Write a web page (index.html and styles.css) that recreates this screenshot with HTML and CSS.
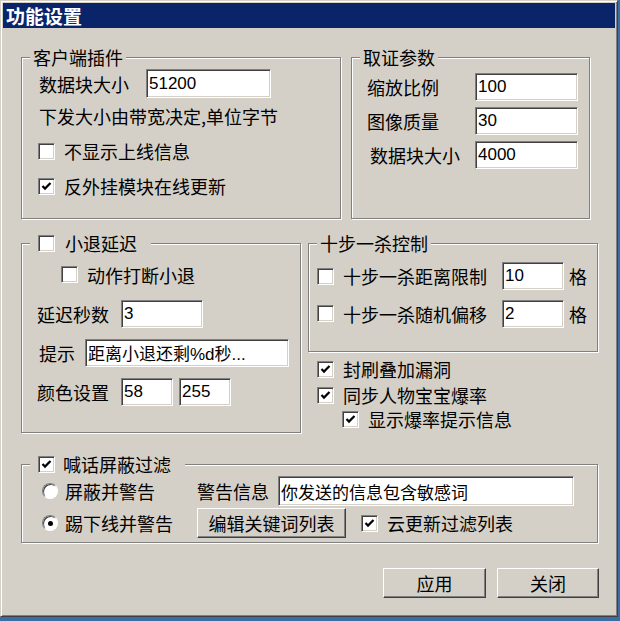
FILE: index.html
```html
<!DOCTYPE html>
<html lang="zh-CN">
<head>
  <meta charset="UTF-8">
  <title>功能设置</title>
  <link rel="stylesheet" href="styles.css">
</head>
<body>
  <div class="window">
    <div class="titlebar">功能设置</div>
    <div class="content">

      <div class="row-top">
        <fieldset class="group group-client">
          <legend>客户端插件</legend>
          <div class="inner">
            <div class="line a-row1">
              <span class="lbl lbl-block">数据块大小</span>
              <input class="edit w-block" type="text" value="51200">
            </div>
            <div class="line a-row2">下发大小由带宽决定,单位字节</div>
            <label class="line a-row3">
              <span class="chk"></span><span class="chk-text">不显示上线信息</span>
            </label>
            <label class="line a-row4">
              <span class="chk"><svg viewBox="0 0 13 13"><polyline points="2.5,6 5,8.6 10.5,3"/></svg></span><span class="chk-text">反外挂模块在线更新</span>
            </label>
          </div>
        </fieldset>

        <fieldset class="group group-evidence">
          <legend>取证参数</legend>
          <div class="inner">
            <div class="line b-row">
              <span class="lbl lbl-ev">缩放比例</span>
              <input class="edit w-ev" type="text" value="100">
            </div>
            <div class="line b-row">
              <span class="lbl lbl-ev">图像质量</span>
              <input class="edit w-ev" type="text" value="30">
            </div>
            <div class="line b-row">
              <span class="lbl lbl-ev lbl-shift">数据块大小</span>
              <input class="edit w-ev" type="text" value="4000">
            </div>
          </div>
        </fieldset>
      </div>

      <div class="row-mid">
        <fieldset class="group group-delay">
          <legend class="legend-check">
            <span class="chk"></span><span class="legend-text">小退延迟</span>
          </legend>
          <div class="inner">
            <label class="line c-row c-indent">
              <span class="chk"></span><span class="chk-text">动作打断小退</span>
            </label>
            <div class="line c-row">
              <span class="lbl lbl-delay">延迟秒数</span>
              <input class="edit w-delay" type="text" value="3">
            </div>
            <div class="line c-row">
              <span class="lbl lbl-tip">提示</span>
              <input class="edit w-tip" type="text" value="距离小退还剩%d秒...">
            </div>
            <div class="line c-row">
              <span class="lbl lbl-delay">颜色设置</span>
              <input class="edit w-color" type="text" value="58">
              <input class="edit w-color color-gap" type="text" value="255">
            </div>
          </div>
        </fieldset>

        <div class="col-right">
          <fieldset class="group group-kill">
            <legend>十步一杀控制</legend>
            <div class="inner">
              <div class="line d-row1">
                <span class="chk"></span><span class="chk-text kill-text">十步一杀距离限制</span>
                <input class="edit w-kill" type="text" value="10">
                <span class="unit">格</span>
              </div>
              <div class="line d-row2">
                <span class="chk"></span><span class="chk-text kill-text">十步一杀随机偏移</span>
                <input class="edit w-kill" type="text" value="2">
                <span class="unit">格</span>
              </div>
            </div>
          </fieldset>

          <div class="extra-checks">
            <label class="line e-row e-first">
              <span class="chk"><svg viewBox="0 0 13 13"><polyline points="2.5,6 5,8.6 10.5,3"/></svg></span><span class="chk-text">封刷叠加漏洞</span>
            </label>
            <label class="line e-row e-second">
              <span class="chk"><svg viewBox="0 0 13 13"><polyline points="2.5,6 5,8.6 10.5,3"/></svg></span><span class="chk-text">同步人物宝宝爆率</span>
            </label>
            <label class="line e-row e-indent">
              <span class="chk"><svg viewBox="0 0 13 13"><polyline points="2.5,6 5,8.6 10.5,3"/></svg></span><span class="chk-text">显示爆率提示信息</span>
            </label>
          </div>
        </div>
      </div>

      <fieldset class="group group-filter">
        <legend class="legend-check legend-filter">
          <span class="chk"><svg viewBox="0 0 13 13"><polyline points="2.5,6 5,8.6 10.5,3"/></svg></span><span class="legend-text">喊话屏蔽过滤</span>
        </legend>
        <div class="inner filter-grid">
          <label class="line f-row">
            <span class="radio"></span><span class="radio-text">屏蔽并警告</span>
          </label>
          <div class="line f-row">
            <span class="lbl lbl-warn">警告信息</span>
            <input class="edit w-warn" type="text" value="你发送的信息包含敏感词">
          </div>
          <label class="line f-row">
            <span class="radio radio-on"></span><span class="radio-text">踢下线并警告</span>
          </label>
          <div class="line f-row">
            <button class="btn btn-edit">编辑关键词列表</button>
            <span class="chk chk-cloud"><svg viewBox="0 0 13 13"><polyline points="2.5,6 5,8.6 10.5,3"/></svg></span><span class="chk-text">云更新过滤列表</span>
          </div>
        </div>
      </fieldset>

      <div class="buttons">
        <button class="btn btn-apply">应用</button>
        <button class="btn btn-close">关闭</button>
      </div>

    </div>
  </div>
</body>
</html>
```

FILE: styles.css
```css
body {
  margin: 0;
  background-color: #3a6ea5;
  font-family: "Noto Sans CJK SC", sans-serif;
  font-size: 18px;
  color: #000;
}

.window {
  box-sizing: border-box;
  width: 618px;
  height: 617px;
  padding: 2px;
  background-color: #d4d0c8;
  border: 1px solid;
  border-color: #d4d0c8 #404040 #404040 #d4d0c8;
  box-shadow: inset 1px 1px 0 #fff, inset -1px -1px 0 #808080;
}

.titlebar {
  height: 25px;
  line-height: 25px;
  padding-left: 3px;
  background-color: #0a246a;
  color: #fff;
  font-weight: bold;
  font-size: 19px;
}

.content {
  padding: 18px 16px 0 18px;
}

/* group boxes */
.group {
  box-sizing: border-box;
  margin: 0;
  padding: 0 0 0 8px;
  min-width: 0;
  border: 1px solid #808080;
  box-shadow: inset 1px 1px 0 #fff, 1px 1px 0 #fff;
}

.group legend {
  height: 22px;
  line-height: 22px;
  padding: 0 3px;
  background-color: #d4d0c8;
}

.legend-check {
  display: flex;
  align-items: center;
}

.group .legend-check {
  padding: 0 14px 0 8px;
}

.legend-text {
  margin-left: 10px;
}

.legend-filter .legend-text {
  margin-left: 8px;
}

.line {
  display: flex;
  align-items: center;
  line-height: 22px;
  white-space: nowrap;
}

.lbl {
  display: block;
}

/* edit boxes */
.edit {
  box-sizing: border-box;
  height: 28px;
  margin: 0;
  padding: 0 2px;
  background: #fff;
  color: #000;
  font-family: "Liberation Sans", "Noto Sans CJK SC", sans-serif;
  font-size: 17px;
  border: 1px solid;
  border-color: #808080 #fff #fff #808080;
  box-shadow: inset 1px 1px 0 #404040, inset -1px -1px 0 #d4d0c8;
  outline: none;
}

/* check boxes */
.chk {
  box-sizing: border-box;
  flex: none;
  width: 17px;
  height: 17px;
  background: #fff;
  border: 1px solid;
  border-color: #808080 #fff #fff #808080;
  box-shadow: inset 1px 1px 0 #404040, inset -1px -1px 0 #d4d0c8;
  display: flex;
  align-items: center;
  justify-content: center;
}

.chk svg {
  width: 13px;
  height: 13px;
}

.chk polyline {
  fill: none;
  stroke: #000;
  stroke-width: 2.2;
}

.chk-text {
  margin-left: 9px;
}

/* radio buttons */
.radio {
  box-sizing: border-box;
  flex: none;
  width: 16px;
  height: 16px;
  border-radius: 50%;
  background: #fff;
  border: 1px solid;
  border-color: #808080 #fff #fff #808080;
  box-shadow: inset 1px 1px 0 #404040;
  display: flex;
  align-items: center;
  justify-content: center;
}

.radio-on::after {
  content: "";
  width: 5px;
  height: 5px;
  border-radius: 50%;
  background: #000;
}

.radio-text {
  margin-left: 7px;
}

/* push buttons */
.btn {
  box-sizing: border-box;
  height: 30px;
  margin: 0;
  padding: 0;
  background-color: #d4d0c8;
  color: #000;
  font-family: "Noto Sans CJK SC", sans-serif;
  font-size: 18px;
  border: 1px solid;
  border-color: #fff #404040 #404040 #fff;
  box-shadow: inset -1px -1px 0 #808080;
}

/* top row */
.row-top {
  display: flex;
  gap: 10px;
}

.group-client {
  width: 320px;
  height: 173px;
}

.group-client .inner {
  padding-left: 9px;
}

.a-row1 { height: 31px; }
.a-row2 { height: 34px; }
.a-row3 { height: 36px; }
.a-row4 { height: 34px; }

.a-row3 .chk,
.a-row4 .chk {
  margin-left: -1px;
}

.lbl-block {
  width: 107px;
}

.w-block {
  width: 125px;
  height: 29px;
}

.group-evidence {
  width: 239px;
  height: 173px;
}

.group-evidence .inner {
  padding: 2px 0 0 7px;
}

.b-row {
  height: 34px;
}

.lbl-ev {
  width: 108px;
}

.lbl-shift {
  box-sizing: border-box;
  padding-left: 3px;
}

.w-ev {
  width: 103px;
}

/* middle row */
.row-mid {
  display: flex;
  gap: 7px;
  margin-top: 13px;
}

.group-delay {
  width: 280px;
  height: 201px;
}

.group-delay .inner {
  padding: 1px 0 0 7px;
}

.c-row {
  height: 39px;
}

.c-indent {
  padding-left: 24px;
}

.lbl-delay {
  width: 84px;
}

.lbl-tip {
  width: 46px;
  margin-left: 2px;
}

.w-delay { width: 82px; }
.w-tip { width: 204px; }
.w-color { width: 52px; }

.color-gap {
  margin-left: 6px;
}

.col-right {
  width: 290px;
}

.group-kill {
  width: 290px;
  height: 120px;
}

.group-kill .inner {
  padding-top: 2px;
}

.d-row1 { height: 40px; }
.d-row2 { height: 35px; }

.kill-text {
  width: 144px;
}

.w-kill {
  width: 62px;
  margin-left: 15px;
}

.unit {
  margin-left: 5px;
}

.extra-checks {
  padding-left: 9px;
}

.e-row { height: 24px; }
.e-first { margin-top: 5px; }
.e-second { margin-top: 2px; }

.e-indent {
  padding-left: 25px;
}

/* filter group */
.group-filter {
  width: 577px;
  height: 90px;
  margin-top: 20px;
}

.filter-grid {
  display: grid;
  grid-template-columns: 155px auto;
  padding-left: 12px;
}

.f-row {
  height: 32px;
}

.lbl-warn {
  width: 81px;
}

.w-warn {
  width: 296px;
  height: 30px;
}

.btn-edit {
  width: 149px;
}

.chk-cloud {
  margin-left: 15px;
}

/* bottom buttons */
.buttons {
  display: flex;
  justify-content: flex-end;
  gap: 11px;
  margin-top: 25px;
}

.btn-apply { width: 103px; }
.btn-close { width: 102px; }
```
